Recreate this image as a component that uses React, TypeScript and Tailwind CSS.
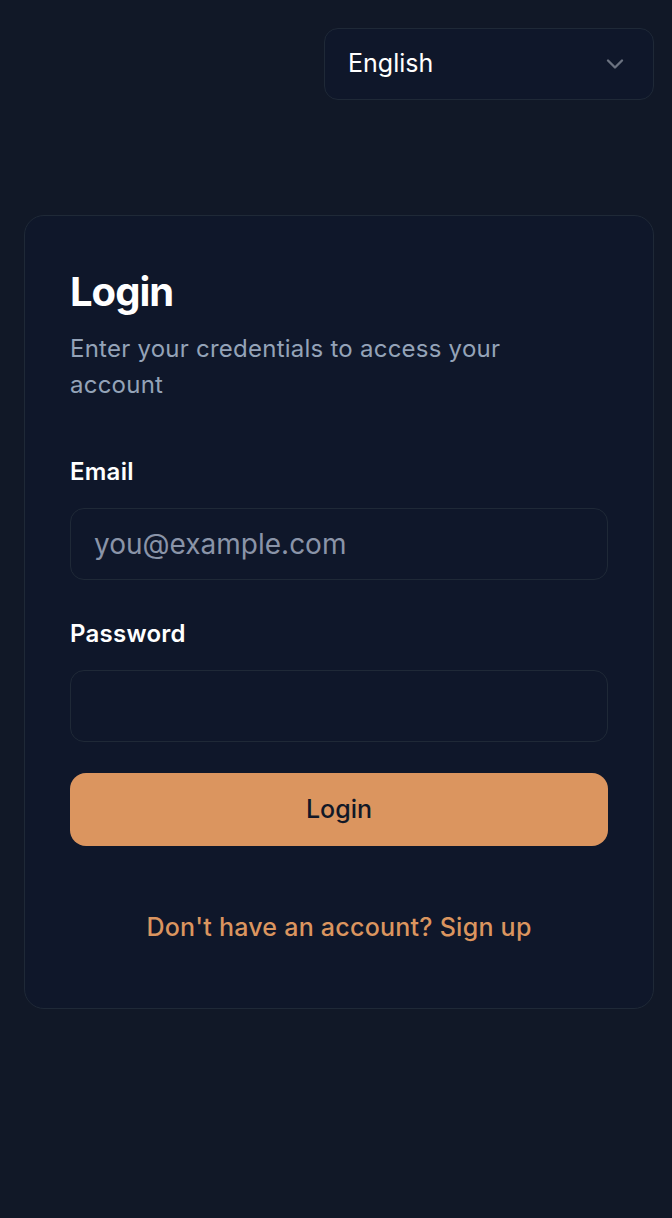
import { ChevronDown } from "lucide-react";

const Field = ({
  label,
  type,
  placeholder,
  className,
}: {
  label: string;
  type: string;
  placeholder?: string;
  className?: string;
}) => (
  <div className={className}>
    <label className="block text-[24px] leading-[32px] font-semibold tracking-[0.01em] text-white">
      {label}
    </label>
    <input
      type={type}
      placeholder={placeholder}
      className="mt-[20px] block h-[72px] w-full rounded-[14px] border border-[#1f2937] bg-transparent px-[23px] text-[28px] text-white outline-none placeholder:text-[#8a94a8]"
    />
  </div>
);

const App = () => {
  return (
    <div className="min-h-screen bg-[#111827] font-['Inter',sans-serif]">
      <div className="flex justify-end pt-[28px] pr-[18px]">
        <button className="flex h-[72px] w-[330px] items-center justify-between rounded-[14px] border border-[#1f2937] bg-[#0f172a] pl-[23px] pr-[24px] text-[25px] text-white">
          {"English"}
          <ChevronDown size={28} strokeWidth={2} className="text-[#6b7280]" />
        </button>
      </div>

      <div className="ml-[24px] mr-[18px] mt-[115px] rounded-[20px] border border-[#1f2937] bg-[#0f172a] px-[45px] pt-[52px] pb-[65px]">
        <h1 className="text-[40px] leading-[48px] font-bold tracking-tight text-white">
          {"Login"}
        </h1>
        <p className="mt-[15px] max-w-[470px] text-[24px] leading-[36px] tracking-[0.01em] text-[#94a3b8]">
          {"Enter your credentials to access your account"}
        </p>

        <Field
          label="Email"
          type="email"
          placeholder="you@example.com"
          className="mt-[53px]"
        />
        <Field label="Password" type="password" className="mt-[38px]" />

        <button className="mt-[31px] h-[73px] w-full rounded-[16px] bg-[#db955f] text-[25px] font-medium text-[#111827]">
          {"Login"}
        </button>

        <p className="mt-[65px] text-center text-[25px] leading-[32px] font-medium tracking-[0.01em] text-[#db955f]">
          {"Don't have an account? Sign up"}
        </p>
      </div>
    </div>
  );
};

export default App;
